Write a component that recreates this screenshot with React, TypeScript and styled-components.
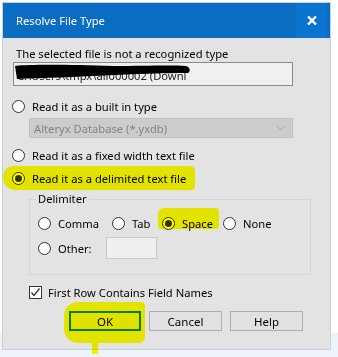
import styled, { createGlobalStyle } from "styled-components";

const GlobalStyle = createGlobalStyle`
  html, body {
    margin: 0;
    padding: 0;
  }
  body {
    width: 338px;
    height: 357px;
    overflow: hidden;
    background: linear-gradient(#ffffff 0, #ffffff 333px, #eef3fb 333px);
    font-family: "Noto Sans", "Segoe UI", sans-serif;
    font-size: 11.2px;
    color: #000;
  }
`;

const Window = styled.div`
  position: relative;
  margin: 2px 0 0 2px;
  width: 329px;
  height: 348px;
  box-sizing: border-box;
  border: 1px solid #c6d0e0;
  background: #e3e3e3;
  display: flex;
  flex-direction: column;
`;

const TitleBar = styled.div`
  height: 35px;
  flex-shrink: 0;
  background: #0a6dc2;
  color: #fff;
  display: flex;
  align-items: center;
  padding-left: 13px;
`;

const Title = styled.span`
  flex: 1;
`;

const CloseButton = styled.div`
  width: 31px;
  height: 35px;
  margin-right: 3px;
  background: #0b73d0;
  display: flex;
  align-items: center;
  justify-content: center;
`;

const Body = styled.div`
  display: flex;
  flex-direction: column;
  padding: 8px 10px 0 10px;
`;

const Prompt = styled.div`
  line-height: 16px;
  margin-left: 3px;
  white-space: nowrap;
`;

const PathBox = styled.div`
  position: relative;
  width: 280px;
  height: 24px;
  box-sizing: border-box;
  border: 1px solid #8a8a8a;
  background: #f0f0f0;
  display: flex;
  align-items: center;
  padding: 2px 0 0 3px;
  overflow: hidden;
  white-space: nowrap;
  color: #222;
`;

const Redaction = styled.svg`
  position: absolute;
  left: 0;
  top: 0;
`;

const RadioRow = styled.label<{ $top: number; $indent?: number }>`
  display: flex;
  align-items: center;
  height: 20px;
  margin-top: ${(p) => p.$top}px;
  margin-left: ${(p) => p.$indent ?? -1}px;
  white-space: nowrap;
`;

const RadioCircle = styled.span<{ $checked?: boolean }>`
  width: 13px;
  height: 13px;
  box-sizing: border-box;
  border-radius: 50%;
  border: 1px solid #333;
  background: #fff;
  display: flex;
  align-items: center;
  justify-content: center;
  margin-right: 7px;
  flex-shrink: 0;

  &::after {
    content: "";
    display: ${(p) => (p.$checked ? "block" : "none")};
    width: 7px;
    height: 7px;
    border-radius: 50%;
    background: #333;
  }
`;

const Dropdown = styled.div`
  width: 264px;
  height: 20px;
  box-sizing: border-box;
  margin: 2px 0 0 16px;
  border: 1px solid #c2c2c2;
  background: #cccccc;
  color: #838383;
  display: flex;
  align-items: center;
  justify-content: space-between;
  padding: 0 6px 0 4px;
`;

const GroupBox = styled.div`
  width: 282px;
  height: 76px;
  box-sizing: border-box;
  margin: 11px 0 0 16px;
  border: 1px solid #d4d4d4;
  padding: 0 8px;
  display: flex;
  flex-direction: column;
`;

const Legend = styled.span`
  align-self: flex-start;
  margin: -9px 0 0 -2px;
  padding: 0 2px;
  line-height: 16px;
  background: #e3e3e3;
`;

const OptionRow = styled.div<{ $top: number; $height: number }>`
  display: flex;
  align-items: center;
  height: ${(p) => p.$height}px;
  margin-top: ${(p) => p.$top}px;
`;

const Option = styled.label<{ $width?: number }>`
  display: flex;
  align-items: center;
  width: ${(p) => (p.$width ? `${p.$width}px` : "auto")};
  white-space: nowrap;
`;

const OtherInput = styled.div`
  width: 51px;
  height: 22px;
  box-sizing: border-box;
  margin-left: 12px;
  border: 1px solid #c8c8c8;
  background: #efefef;
`;

const CheckRow = styled.label`
  display: flex;
  align-items: center;
  height: 16px;
  margin: 9px 0 0 16px;
  white-space: nowrap;
`;

const CheckBox = styled.span`
  width: 13px;
  height: 13px;
  box-sizing: border-box;
  border: 1px solid #333;
  background: #fff;
  display: flex;
  align-items: center;
  justify-content: center;
  margin-right: 6px;
`;

const ButtonRow = styled.div`
  display: flex;
  gap: 8px;
  margin: 11px 0 0 56px;
`;

const Button = styled.div<{ $default?: boolean; $width: number }>`
  width: ${(p) => p.$width}px;
  height: 20px;
  box-sizing: border-box;
  border: ${(p) => (p.$default ? "2px solid #0a7d0a" : "1px solid #adadad")};
  background: #e1e1e1;
  display: flex;
  align-items: center;
  justify-content: center;
  font-size: 11.5px;
`;

const Marker = styled.div<{ $radius: string }>`
  position: absolute;
  background: #ffff00;
  mix-blend-mode: multiply;
  border-radius: ${(p) => p.$radius};
  pointer-events: none;
`;

export default function App() {
  return (
    <>
      <GlobalStyle />
      <Window>
        <TitleBar>
          <Title>Resolve File Type</Title>
          <CloseButton>
            <svg width="10" height="9" viewBox="0 0 10 9">
              <path d="M1 0.5 L9 8.5 M9 0.5 L1 8.5" stroke="#fff" strokeWidth="2.4" />
            </svg>
          </CloseButton>
        </TitleBar>
        <Body>
          <Prompt>The selected file is not a recognized type</Prompt>
          <PathBox>
            C:\Users\tmpx\ali000002 (Downl
            <Redaction width="278" height="22" viewBox="0 0 278 22">
              <path
                d="M1 3 C 20 1 60 2 100 3 C 130 3 155 2 172 3 C 176 4 177 8 174 10 C 150 10 120 11 100 12 C 60 14 30 15 3 16 Z"
                fill="#000"
              />
            </Redaction>
          </PathBox>
          <RadioRow $top={10}>
            <RadioCircle />
            Read it as a built in type
          </RadioRow>
          <Dropdown>
            <span>Alteryx Database (*.yxdb)</span>
            <svg width="10" height="6" viewBox="0 0 10 6">
              <polyline points="0.5,0.5 5,5 9.5,0.5" fill="none" stroke="#a8a8a8" strokeWidth="1" />
            </svg>
          </Dropdown>
          <RadioRow $top={7}>
            <RadioCircle />
            Read it as a fixed width text file
          </RadioRow>
          <RadioRow $top={3}>
            <RadioCircle $checked />
            Read it as a delimited text file
          </RadioRow>
          <GroupBox>
            <Legend>Delimiter</Legend>
            <OptionRow $top={6} $height={20}>
              <Option $width={74}>
                <RadioCircle />
                Comma
              </Option>
              <Option $width={50}>
                <RadioCircle />
                Tab
              </Option>
              <Option $width={61}>
                <RadioCircle $checked />
                Space
              </Option>
              <Option>
                <RadioCircle />
                None
              </Option>
            </OptionRow>
            <OptionRow $top={4} $height={22}>
              <Option $width={56}>
                <RadioCircle />
                Other:
              </Option>
              <OtherInput />
            </OptionRow>
          </GroupBox>
          <CheckRow>
            <CheckBox>
              <svg width="11" height="11" viewBox="0 0 11 11">
                <polyline points="1.5,5.5 4,8.5 9.5,1.5" fill="none" stroke="#333" strokeWidth="1.3" />
              </svg>
            </CheckBox>
            First Row Contains Field Names
          </CheckRow>
          <ButtonRow>
            <Button $default $width={72}>OK</Button>
            <Button $width={73}>Cancel</Button>
            <Button $width={73}>Help</Button>
          </ButtonRow>
        </Body>
        <Marker $radius="10px 5px 4px 12px" style={{ left: 0, top: 163, width: 192, height: 24 }} />
        <Marker $radius="6px 3px 3px 3px" style={{ left: 155, top: 205, width: 61, height: 21 }} />
        <Marker $radius="14px 4px 6px 14px" style={{ left: 61, top: 299, width: 81, height: 41 }} />
        <Marker $radius="0" style={{ left: 89, top: 337, width: 6, height: 14 }} />
      </Window>
    </>
  );
}
